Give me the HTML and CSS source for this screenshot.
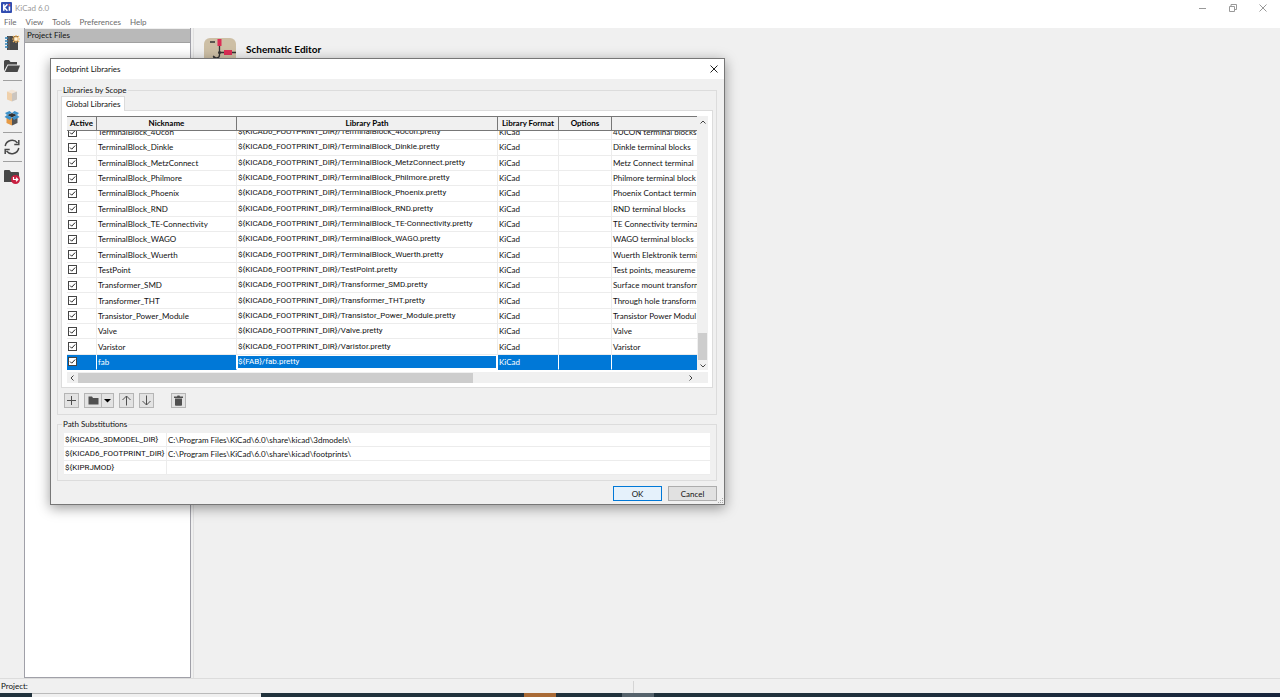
FILE: index.html
```html
<!DOCTYPE html>
<html lang="en">
<head>
<meta charset="utf-8">
<title>KiCad 6.0</title>
<link rel="stylesheet" href="styles.css">
</head>
<body>
<div class="app">
  <header class="titlebar">
    <svg class="logo" viewBox="0 0 12 12"><rect width="12" height="12" rx="1" fill="#314cb0"/><path d="M3 2.5v7M7 2.5L3.5 6L7 9.500M9.200 5v4.500" stroke="#fff" stroke-width="1.700" fill="none"/><circle cx="9.200" cy="3" r="1" fill="#e55"/></svg>
    <span class="app-name">KiCad 6.0</span>
    <div class="window-controls">
      <button aria-label="Minimize"><svg viewBox="0 0 8 8"><path d="M0 4.500h7"/></svg></button>
      <button aria-label="Restore"><svg viewBox="0 0 8 8"><path d="M.5 2.500h5v5h-5zM2 2.500v-2h5.500v5h-2"/></svg></button>
      <button aria-label="Close"><svg viewBox="0 0 8 8"><path d="M.5.5l7 7M7.500.5l-7 7"/></svg></button>
    </div>
  </header>
  <nav class="menu">
    <button>File</button><button>View</button><button>Tools</button><button>Preferences</button><button>Help</button>
  </nav>
  <main class="workspace">
    <div class="tools">
      <button aria-label="New project"><svg viewBox="0 0 16 16"><path d="M3 1h11v14H3z" fill="#484848"/><path d="M5 1v14" stroke="#8a8a8a" stroke-width=".6"/><path d="M1 3h3M1 6h3M1 9h3M1 12h3" stroke="#2f83b8" stroke-width="1.500"/><path d="M12 0v8M8 4h8M9 1l6 6M15 1L9 7" stroke="#f0b35c" stroke-width="1.200"/><circle cx="12" cy="4" r="1.800" fill="#fff3d8"/></svg></button>
      <button aria-label="Open project"><svg viewBox="0 0 16 16"><path d="M0 13V3.500Q0 2 1.500 2H5l1.500 2H13v2.500H3.500z" fill="#484848"/><path d="M4 7.500h12L13.500 14H1z" fill="#484848"/></svg></button>
      <hr>
      <button aria-label="Archive project"><svg viewBox="0 0 16 16"><path d="M3 4.500l5-2 5 2-5 2z" fill="#f2e5d7"/><path d="M3 4.500l5 2v8l-5-2z" fill="#efd0ab"/><path d="M13 4.500l-5 2v8l5-2z" fill="#cbc5bf"/></svg></button>
      <button aria-label="Unarchive project"><svg viewBox="0 0 16 16"><path d="M2.500 6L8 8v7.500L2.500 13z" fill="#e69a45"/><path d="M13.500 6L8 8v7.500l5.500-2.500z" fill="#555"/><path d="M3 5l5-2 5 2-5 2.500z" fill="#333"/><path d="M1 3l4.500-2L8 3 3 5zM15 3l-4.500-2L8 3l5 2zM.5 7L3 5l5 2.500L6 10zM15.500 7L13 5 8 7.500 10 10z" fill="#3c91ca"/></svg></button>
      <hr>
      <button aria-label="Refresh"><svg viewBox="0 0 16 16" fill="none" stroke="#484848" stroke-width="1.500"><path d="M1.200 7A7 7 0 0 1 13.500 4M14.800 9A7 7 0 0 1 2.500 12"/><path d="M14.800 1v4.500h-4.500M1.200 15v-4.500h4.500"/></svg></button>
      <hr>
      <button aria-label="Open project folder"><svg viewBox="0 0 16 16"><path d="M0 14V3q0-1 1-1h4.500L7 4h7q1 0 1 1v9z" fill="#484848"/><circle cx="11.500" cy="11.500" r="4.500" fill="#c81f40"/><path d="M9.500 9v2.500h4M12 9.800l1.800 1.700-1.800 1.700" stroke="#fff" stroke-width="1.200" fill="none"/></svg></button>
    </div>
    <section class="project-files"><h2>Project Files</h2><div class="tree"></div></section>
    <section class="launcher">
      <button class="launch">
        <svg viewBox="0 0 32 32"><rect width="32" height="32" rx="6" fill="#cdbfa5"/><path d="M6 4h5M15.500 1v16q0 3-3 3H9M15.500 14.500H32M9 18l3 2" stroke="#333" stroke-width="1.300" fill="none"/><path d="M13.500 1h4v7h-4zM20 12h8v5h-8z" fill="#dc2d55"/><circle cx="15.500" cy="14.500" r="1.500" fill="#333"/></svg>
        <span>Schematic Editor</span>
      </button>
    </section>
  </main>
  <footer class="status"><span>Project:</span><span></span></footer>
  <div class="taskbar"><i class="search"></i><i class="orange"></i><i class="gray"></i></div>
</div>

<div class="dialog" role="dialog" aria-label="Footprint Libraries">
  <div class="dialog-title"><span>Footprint Libraries</span><button aria-label="Close dialog"><svg viewBox="0 0 8 8"><path d="M.5.5l7 7M7.500.5l-7 7"/></svg></button></div>
  <div class="dialog-body">
    <fieldset class="scope">
      <legend>Libraries by Scope</legend>
      <button class="tab" role="tab" aria-selected="true">Global Libraries</button>
      <div class="page">
        <div class="grid-area">
          <div class="grid">
            <table class="lib head">
              <colgroup><col class="c-active"><col class="c-name"><col class="c-path"><col class="c-format"><col class="c-options"><col></colgroup>
              <thead><tr><th>Active</th><th>Nickname</th><th>Library Path</th><th>Library Format</th><th>Options</th><th></th></tr></thead>
            </table>
            <div class="rows">
              <table class="lib body">
                <colgroup><col class="c-active"><col class="c-name"><col class="c-path"><col class="c-format"><col class="c-options"><col></colgroup>
                <tbody>
                <tr><td><input type="checkbox" checked aria-label="TerminalBlock_4Ucon active"></td><td>TerminalBlock_4Ucon</td><td>${KICAD6_FOOTPRINT_DIR}/TerminalBlock_4Ucon.pretty</td><td>KiCad</td><td></td><td>4UCON terminal blocks</td></tr>
                <tr><td><input type="checkbox" checked aria-label="TerminalBlock_Dinkle active"></td><td>TerminalBlock_Dinkle</td><td>${KICAD6_FOOTPRINT_DIR}/TerminalBlock_Dinkle.pretty</td><td>KiCad</td><td></td><td>Dinkle terminal blocks</td></tr>
                <tr><td><input type="checkbox" checked aria-label="TerminalBlock_MetzConnect active"></td><td>TerminalBlock_MetzConnect</td><td>${KICAD6_FOOTPRINT_DIR}/TerminalBlock_MetzConnect.pretty</td><td>KiCad</td><td></td><td>Metz Connect terminal</td></tr>
                <tr><td><input type="checkbox" checked aria-label="TerminalBlock_Philmore active"></td><td>TerminalBlock_Philmore</td><td>${KICAD6_FOOTPRINT_DIR}/TerminalBlock_Philmore.pretty</td><td>KiCad</td><td></td><td>Philmore terminal block</td></tr>
                <tr><td><input type="checkbox" checked aria-label="TerminalBlock_Phoenix active"></td><td>TerminalBlock_Phoenix</td><td>${KICAD6_FOOTPRINT_DIR}/TerminalBlock_Phoenix.pretty</td><td>KiCad</td><td></td><td>Phoenix Contact termin</td></tr>
                <tr><td><input type="checkbox" checked aria-label="TerminalBlock_RND active"></td><td>TerminalBlock_RND</td><td>${KICAD6_FOOTPRINT_DIR}/TerminalBlock_RND.pretty</td><td>KiCad</td><td></td><td>RND terminal blocks</td></tr>
                <tr><td><input type="checkbox" checked aria-label="TerminalBlock_TE-Connectivity active"></td><td>TerminalBlock_TE-Connectivity</td><td>${KICAD6_FOOTPRINT_DIR}/TerminalBlock_TE-Connectivity.pretty</td><td>KiCad</td><td></td><td>TE Connectivity termina</td></tr>
                <tr><td><input type="checkbox" checked aria-label="TerminalBlock_WAGO active"></td><td>TerminalBlock_WAGO</td><td>${KICAD6_FOOTPRINT_DIR}/TerminalBlock_WAGO.pretty</td><td>KiCad</td><td></td><td>WAGO terminal blocks</td></tr>
                <tr><td><input type="checkbox" checked aria-label="TerminalBlock_Wuerth active"></td><td>TerminalBlock_Wuerth</td><td>${KICAD6_FOOTPRINT_DIR}/TerminalBlock_Wuerth.pretty</td><td>KiCad</td><td></td><td>Wuerth Elektronik termi</td></tr>
                <tr><td><input type="checkbox" checked aria-label="TestPoint active"></td><td>TestPoint</td><td>${KICAD6_FOOTPRINT_DIR}/TestPoint.pretty</td><td>KiCad</td><td></td><td>Test points, measureme</td></tr>
                <tr><td><input type="checkbox" checked aria-label="Transformer_SMD active"></td><td>Transformer_SMD</td><td>${KICAD6_FOOTPRINT_DIR}/Transformer_SMD.pretty</td><td>KiCad</td><td></td><td>Surface mount transforn</td></tr>
                <tr><td><input type="checkbox" checked aria-label="Transformer_THT active"></td><td>Transformer_THT</td><td>${KICAD6_FOOTPRINT_DIR}/Transformer_THT.pretty</td><td>KiCad</td><td></td><td>Through hole transform</td></tr>
                <tr><td><input type="checkbox" checked aria-label="Transistor_Power_Module active"></td><td>Transistor_Power_Module</td><td>${KICAD6_FOOTPRINT_DIR}/Transistor_Power_Module.pretty</td><td>KiCad</td><td></td><td>Transistor Power Modul</td></tr>
                <tr><td><input type="checkbox" checked aria-label="Valve active"></td><td>Valve</td><td>${KICAD6_FOOTPRINT_DIR}/Valve.pretty</td><td>KiCad</td><td></td><td>Valve</td></tr>
                <tr><td><input type="checkbox" checked aria-label="Varistor active"></td><td>Varistor</td><td>${KICAD6_FOOTPRINT_DIR}/Varistor.pretty</td><td>KiCad</td><td></td><td>Varistor</td></tr>
                <tr class="selected"><td><input type="checkbox" checked aria-label="fab active"></td><td>fab</td><td class="cursor">${FAB}/fab.pretty</td><td>KiCad</td><td></td><td></td></tr>
                </tbody>
              </table>
            </div>
          </div>
          <div class="vbar">
            <svg viewBox="0 0 8 8"><path d="M1.500 5.500L4 3l2.500 2.500"/></svg>
            <i></i>
            <svg viewBox="0 0 8 8"><path d="M1.500 2.500L4 5l2.500-2.500"/></svg>
          </div>
        </div>
        <div class="hbar">
          <svg viewBox="0 0 8 8"><path d="M5.500 1.500L3 4l2.500 2.500"/></svg>
          <i></i>
          <svg viewBox="0 0 8 8"><path d="M2.500 1.500L5 4 2.500 6.500"/></svg>
        </div>
      </div>
      <div class="actions">
        <button aria-label="Add library"><svg viewBox="0 0 11 11"><path d="M5.500 1v9M1 5.500h9"/></svg></button>
        <div class="split">
          <button aria-label="Add existing"><svg viewBox="0 0 11 11"><path d="M.5 9.500v-8H4l1 1.500h5.500v6.500z" class="solid"/></svg></button>
          <button class="drop" aria-label="More"><svg viewBox="0 0 11 11"><path d="M2 4h7L5.500 7.500z" class="black"/></svg></button>
        </div>
        <button aria-label="Move up"><svg viewBox="0 0 11 11"><path d="M5.500 10.500V1M1.500 5l4-4 4 4"/></svg></button>
        <button aria-label="Move down"><svg viewBox="0 0 11 11"><path d="M5.500.5V10M1.500 6l4 4 4-4"/></svg></button>
        <button class="delete" aria-label="Delete"><svg viewBox="0 0 11 11"><path d="M1 1.500h3l.5-1h2l.5 1h3V3H1zM2 3.500h7V10q0 .8-.8.8H2.800Q2 10.800 2 10z" class="solid"/></svg></button>
      </div>
    </fieldset>
    <fieldset class="paths">
      <legend>Path Substitutions</legend>
      <table>
        <tr><td>${KICAD6_3DMODEL_DIR}</td><td>C:\Program Files\KiCad\6.0\share\kicad\3dmodels\</td></tr>
        <tr><td>${KICAD6_FOOTPRINT_DIR}</td><td>C:\Program Files\KiCad\6.0\share\kicad\footprints\</td></tr>
        <tr><td>${KIPRJMOD}</td><td></td></tr>
      </table>
    </fieldset>
    <div class="buttons"><button class="ok">OK</button><button>Cancel</button></div>
  </div>
  <svg class="grip" viewBox="0 0 6 6"><path d="M4 0h1v1H4zM2 2h1v1H2zM4 2h1v1H4zM0 4h1v1H0zM2 4h1v1H2zM4 4h1v1H4z" fill="#aaa"/></svg>
</div>
</body>
</html>
```
FILE: styles.css
```css
* { box-sizing: border-box; }
body { margin: 0; background: #f0f0f0; color: #111; font: 8px/12px Lato, "Open Sans", sans-serif; }
button { margin: 0; padding: 0; border: 0; background: none; font: inherit; color: inherit; }
svg { display: block; flex: none; }
.app { display: flex; flex-direction: column; height: 100vh; }

.titlebar { display: flex; align-items: center; height: 15px; padding-left: 1px; background: #fff; color: #999; }
.logo { width: 11px; height: 11px; margin-right: 3px; }
.window-controls { display: flex; gap: 22px; margin-left: auto; padding-right: 13px; }
.window-controls svg { width: 8px; height: 8px; fill: none; stroke: #999; stroke-width: 1; }
.menu { display: flex; gap: 9px; height: 13px; padding-left: 4px; background: #fff; color: #6b6b6b; }

.workspace { display: flex; flex: 1; min-height: 0; }
.tools { display: flex; flex-direction: column; align-items: center; width: 24px; padding-top: 7px; }
.tools svg { width: 16px; height: 16px; }
.tools button + button { margin-top: 7px; }
.tools hr { width: 19px; height: 1px; margin: 6px 0; border: 0; background: #a0a0a0; }
.project-files { display: flex; flex-direction: column; width: 167px; padding-top: 1px; border: solid #a0a0a8; border-width: 0 1px 1px; }
.project-files h2 { height: 14px; margin: 0; padding-left: 2px; background: #b9b9b9; font-size: 8px; font-weight: 400; line-height: 13px; border-bottom: 1px solid #a0a0a0; }
.tree { flex: 1; background: #fff; }
.launcher { flex: 1; margin-left: 2px; padding: 10px; border-left: 1px solid #e0e0e0; background: #f0f0f0; }
.launch { display: flex; align-items: flex-start; gap: 10px; font-size: 10px; font-weight: 700; line-height: 22px; color: #000; }
.launch svg { width: 32px; height: 32px; }
.status { display: grid; grid-template-columns: 633px 1fr; height: 15px; border-top: 1px solid #dcdcdc; line-height: 15px; }
.status span { padding-left: 1px; }
.status span + span { margin: 2px 0 0; border-left: 1px solid #d5d5d5; }
.taskbar { display: flex; height: 4px; padding-left: 32px; background: linear-gradient(90deg, #21323c 60%, #18253c); }
.search { width: 229px; background: #f0f0f0; border-top: 1px solid #bbb; }
.orange { width: 32px; margin-left: 263px; background: #a96a35; }
.gray { width: 32px; margin-left: 66px; background: #56636c; }

.dialog { position: absolute; left: 50px; top: 58px; width: 675px; border: 1px solid #777; background: #f0f0f0; box-shadow: 0 3px 12px rgba(0, 0, 0, .4); }
.dialog-title { display: flex; align-items: center; justify-content: space-between; height: 20px; padding: 0 6px 0 5px; background: #fff; }
.dialog-title svg { width: 8px; height: 8px; fill: none; stroke: #222; }
.dialog-body { padding: 5px 7px 3px 6px; }
fieldset { min-width: 0; margin: 0; padding: 0 3px; border: 1px solid #dcdcdc; }
legend { height: 12px; margin-left: 1px; padding: 0 1px; }
.tab { display: block; position: relative; height: 15px; padding: 0 4px; border: 1px solid #dcdcdc; border-bottom: 0; background: #fff; }
.page { padding: 5px 4px 4px 5px; margin-top: -1px; border: 1px solid #dcdcdc; background: #fff; }
.grid-area { display: flex; }
.grid { flex: 1; min-width: 0; overflow: hidden; }
.lib { width: 100%; table-layout: fixed; border-collapse: separate; border-spacing: 0; }
.c-active { width: 30px; }
.c-name { width: 140px; }
.c-path { width: 261px; }
.c-format { width: 61px; }
.c-options { width: 53px; }
th { height: 15px; padding: 0; border: solid #777; border-width: 1px 1px 1px 0; background: #f0f0f0; line-height: 11px; white-space: nowrap; color: #000; }
th:last-child { border-right: 0; }
.rows { display: flex; flex-direction: column; justify-content: flex-end; height: 239px; overflow: hidden; }
.body { flex: none; height: 245px; }
.body td { padding: 0 0 0 1px; border: solid #ececec; border-width: 0 1px 1px 0; overflow: hidden; white-space: nowrap; }
.body td:last-child { border-right: 0; }
.body td:nth-child(3), .paths td:first-child { font-family: Roboto, "Open Sans", sans-serif; }
input[type="checkbox"] { display: block; appearance: none; width: 9px; height: 9px; margin: 0; border: 1px solid #444; background: #fff url("data:image/svg+xml,%3Csvg xmlns='http://www.w3.org/2000/svg' viewBox='0 0 7 7'%3E%3Cpath d='M1 3.500L2.700 5.200L6.200 1.500' fill='none' stroke='%23222'/%3E%3C/svg%3E"); }
.body .selected td { background: #0078d7; color: #fff; border-color: #fff; border-bottom-color: #0078d7; }
.body .selected .cursor { box-shadow: inset 0 0 0 1px #fff; border-bottom-color: #fff; }
.vbar { display: flex; flex-direction: column; align-items: center; width: 11px; padding: 2px 0 0; background: #f0f0f0; }
.vbar svg, .hbar svg { width: 8px; height: 8px; fill: none; stroke: #444; stroke-width: 1; }
.vbar i { width: 9px; height: 27px; margin-top: auto; margin-bottom: 2px; background: #cdcdcd; }
.hbar { display: flex; align-items: center; height: 11px; margin: 2px 0 0; padding: 0 13px 0 1px; background: #f0f0f0; }
.hbar i { width: 395px; height: 10px; margin-left: 2px; margin-right: auto; background: #cdcdcd; }
.actions { display: flex; padding: 5px 3px 6px; gap: 5px; }
.actions button { display: grid; place-items: center; width: 15px; height: 15px; border: 1px solid #b5b5b5; background: #e3e3e3; }
.actions svg { width: 11px; height: 11px; fill: none; stroke: #505050; stroke-width: 1; }
.actions .solid { fill: #505050; stroke: none; }
.actions .black { fill: #000; stroke: none; }
.split { display: flex; }
.split button { width: 18px; }
.split .drop { width: 12px; border-left: 0; }
.actions .delete { margin-left: 12px; }
.paths { margin-top: 3px; padding: 3px 6px 5px; }
.paths legend { margin-left: -2px; }
.paths table { width: 100%; border-spacing: 0; background: #fff; table-layout: fixed; }
.paths td { height: 14px; padding: 0 0 0 1px; border-bottom: 1px solid #ececec; white-space: nowrap; }
.paths td:first-child { width: 103px; border-right: 1px solid #ececec; }
.buttons { display: flex; justify-content: flex-end; gap: 6px; padding-top: 5px; }
.buttons button { width: 49px; height: 15px; border: 1px solid #adadad; background: #e1e1e1; }
.buttons .ok { border-color: #0078d7; background: #e5f1fb; }
.grip { position: absolute; right: 0; bottom: 0; width: 6px; height: 6px; }
```
